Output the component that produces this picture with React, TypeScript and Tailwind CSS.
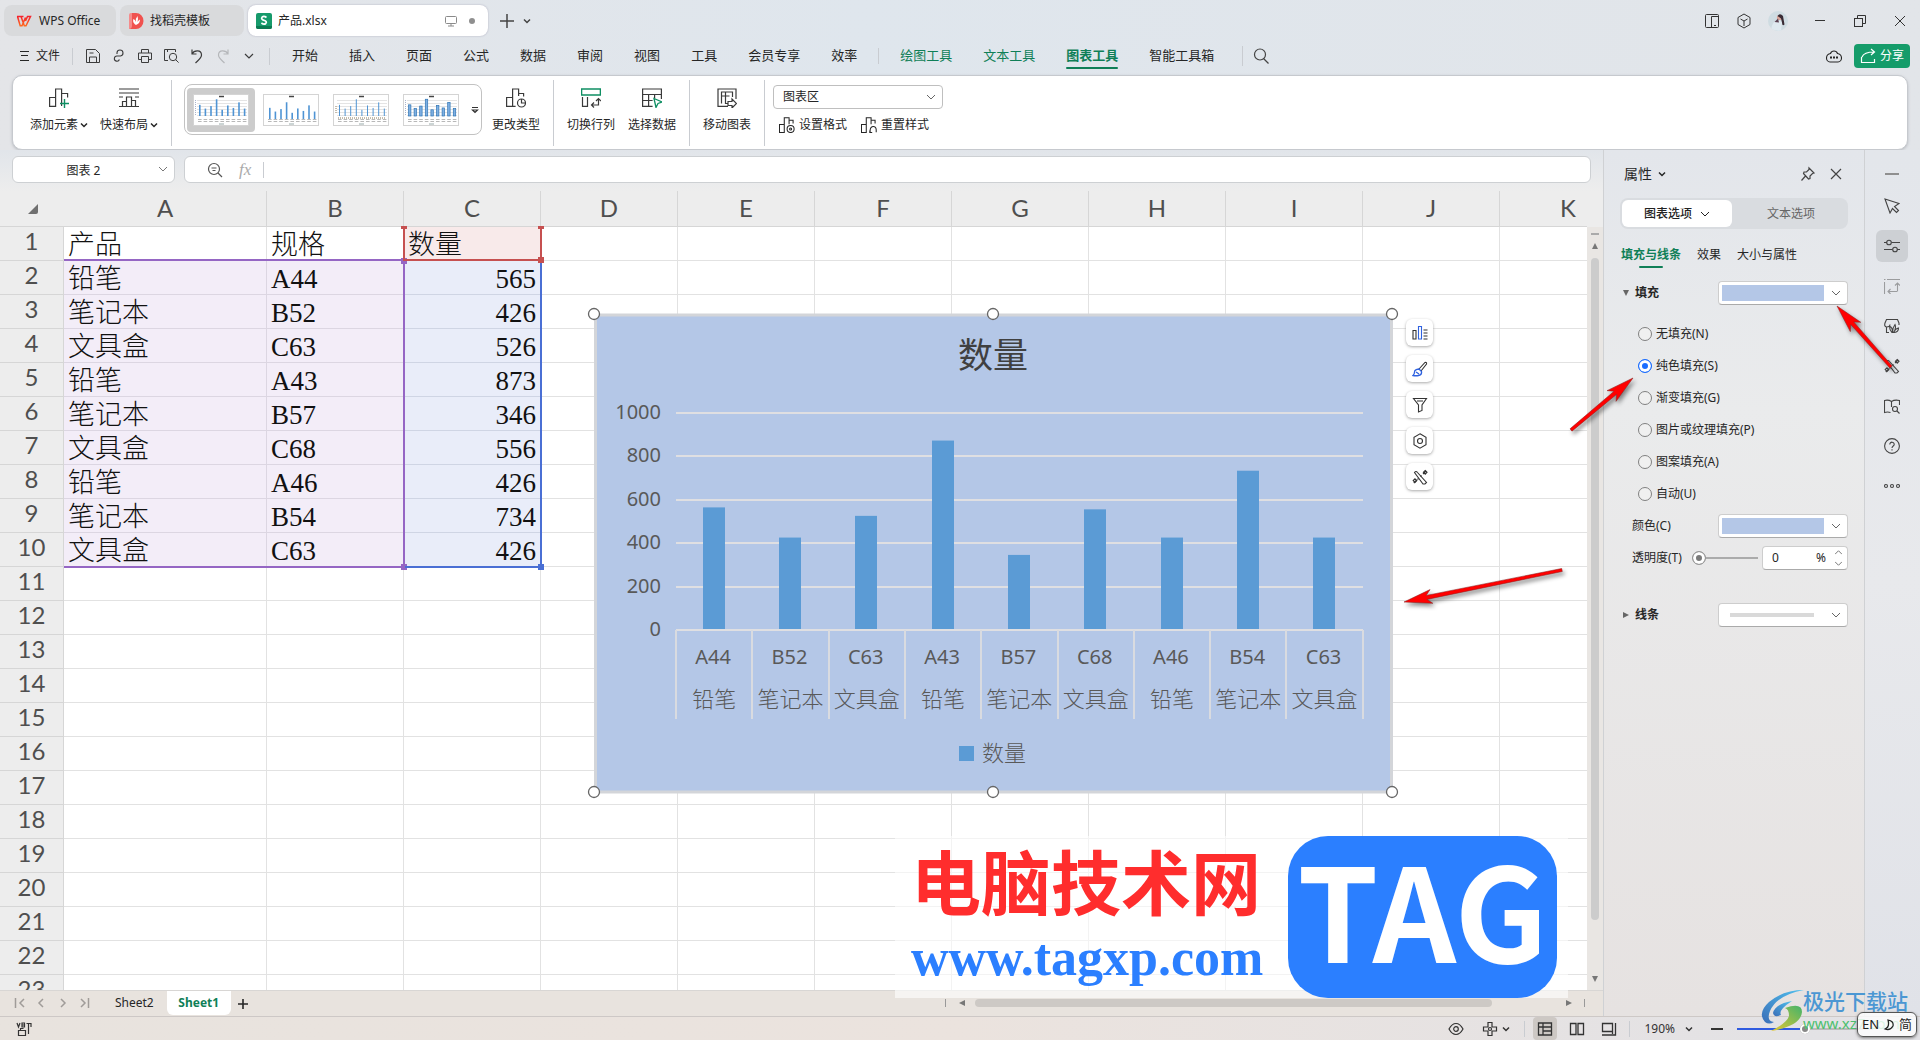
import React from "react";

type IconProps = { children: React.ReactNode; className?: string; box?: number; sw?: number };

function Icon({ children, className = "size-4", box = 16, sw = 1 }: IconProps) {
  return (
    <svg
      viewBox={`0 0 ${box} ${box}`}
      className={`shrink-0 ${className}`}
      fill="none"
      stroke="currentColor"
      strokeWidth={sw}
      aria-hidden="true"
    >
      {children}
    </svg>
  );
}

function Chevron({ className = "size-[10px]", sw = 1 }: { className?: string; sw?: number }) {
  return (
    <Icon box={10} className={className} sw={sw}>
      <path d="M1 3l4 4 4-4" />
    </Icon>
  );
}

function TinyChevron() {
  return (
    <Icon box={8} className="size-2" sw={1.5}>
      <path d="M1 2.500l3 3 3-3" />
    </Icon>
  );
}

function Sep({ className }: { className: string }) {
  return <span className={`w-px shrink-0 bg-[#c9ccd1] ${className}`} />;
}

/* ---------- title bar ---------- */

function TitleBar() {
  return (
    <header className="flex h-[37px] items-start pt-[5px] text-xs text-[#262626]">
      <button className="ml-1 flex h-[31px] w-28 items-center gap-[7px] rounded-lg bg-[#d9dadc] pl-3">
        <svg viewBox="0 0 16 12" className="h-3 w-4" aria-hidden="true">
          <defs>
            <linearGradient id="wps" x1="0" y1="0" x2="0" y2="1">
              <stop offset="0" stopColor="#f5222d" />
              <stop offset="1" stopColor="#ff6a1f" />
            </linearGradient>
          </defs>
          <path
            d="M1 1.500h6.500M1.500 1.500L4.200 10.800H6L9.500 2.500M5 1.500L8.300 10.800H10L14.500 1.500H11.500L9.500 6"
            fill="none"
            stroke="url(#wps)"
            strokeWidth="1.500"
          />
        </svg>
        WPS Office
      </button>
      <button className="ml-1 flex h-[31px] w-[124px] items-center gap-[6px] rounded-lg bg-[#d9dadc] pl-2">
        <svg viewBox="0 0 16 16" className="size-4" aria-hidden="true">
          <path d="M1 2q0-2 2-2h4v16H1z" fill="#f58b8b" />
          <path d="M4 0h4a7.500 8 0 0 1 0 16H2q2-1 2-3z" fill="#f0524f" />
          <path d="M8 12C4.500 10 5 7 5.500 6q2 1 2.500 3Q7.500 5 9.500 3q1 3 0 6 1-2 2.500-2.500 0 4-4 5.500z" fill="#fff" />
        </svg>
        找稻壳模板
      </button>
      <div className="ml-1 flex h-[31px] w-60 items-center rounded-lg bg-white pl-2 shadow-[0_0_2px_#aab]">
        <svg viewBox="0 0 16 16" className="size-4" aria-hidden="true">
          <rect width="16" height="16" rx="2" fill="#169a6b" />
          <path d="M0 13h16v1q0 2-2 2H2q-2 0-2-2z" fill="#0b7a52" />
          <path d="M10.500 4.500Q8 2.600 6.200 4c-1.300 1.200-.4 2.800 1.800 3.300s3 2 1.700 3.200Q8 12 5.400 10" fill="none" stroke="#fff" strokeWidth="1.700" />
        </svg>
        <span className="ml-1.5 flex-1">产品.xlsx</span>
        <Icon className="size-3 text-[#8a8a8a]" box={12}>
          <rect x=".5" y="1.500" width="11" height="7" rx="1" />
          <path d="M6 8.500v2.500M3 11h6" />
        </Icon>
        <span className="mr-[13px] ml-3 size-[6px] rounded-full bg-[#8f8f8f]" />
      </div>
      <button aria-label="新建" className="mt-2 ml-[11px] text-[#444]">
        <Icon className="size-4" sw={1.500}>
          <path d="M8 1v14M1 8h14" />
        </Icon>
      </button>
      <button aria-label="更多标签" className="mt-3 ml-2 text-[#444]">
        <TinyChevron />
      </button>

      <div className="mr-3 ml-auto flex h-[31px] items-center text-[#333]">
        <button aria-label="窗口布局">
          <Icon>
            <rect x="1.500" y="1.500" width="13" height="13" rx="1" />
            <path d="M7.500 14V3.500h7M10 12.500h2" />
          </Icon>
        </button>
        <button aria-label="应用" className="ml-4">
          <Icon>
            <path d="M8 1l6 3.500v7L8 15l-6-3.500v-7zM4.500 6L8 8l3.500-2M8 8v5" />
          </Icon>
        </button>
        <span className="relative ml-4 flex size-5 items-center justify-center overflow-hidden rounded-full bg-[#cfdce2]">
          <svg viewBox="0 0 20 20" className="size-5" aria-hidden="true">
            <path d="M3 19q1-9 7-10l4 2-1 9z" fill="#dfeaf0" />
            <circle cx="11.500" cy="6.500" r="2.600" fill="#d9a79c" />
            <path d="M9.500 5q2.500-3.500 5.500 0l1.500 8.500q-2.500 2-2.500-2l-1-4z" fill="#3a2c35" />
            <path d="M6.500 11l3.500-3.500 1 4z" fill="#5b4252" />
          </svg>
        </span>
        <button aria-label="最小化" className="ml-6">
          <Icon>
            <path d="M3 7.500h10" />
          </Icon>
        </button>
        <button aria-label="还原" className="ml-6">
          <Icon>
            <rect x="2.500" y="5.500" width="8" height="8" />
            <path d="M5.500 5.500v-3h8v8h-3" />
          </Icon>
        </button>
        <button aria-label="关闭" className="ml-6">
          <Icon>
            <path d="M3 3l10 10M13 3L3 13" />
          </Icon>
        </button>
      </div>
    </header>
  );
}

/* ---------- menu row ---------- */

function MenuRow() {
  const tabs = ["开始", "插入", "页面", "公式", "数据", "审阅", "视图", "工具", "会员专享", "效率"];
  return (
    <nav className="flex h-[38px] items-center pl-5 text-[#262626]">
      <button className="flex items-center gap-[6px] text-xs">
        <Icon className="size-[10px]" box={10}>
          <path d="M0 .5h9M1 4.500h7M0 9.500h9" />
        </Icon>
        文件
      </button>
      <Sep className="ml-3 h-[17px]" />
      <div className="ml-3 flex gap-[10px] text-[#3c3c3c]">
        <button aria-label="保存">
          <Icon>
            <path d="M1.500 14.500v-13h9l4 4v9zM4.500 14v-5h7v5M4.500 5h4" />
          </Icon>
        </button>
        <button aria-label="输出">
          <Icon sw={1.100}>
            <path d="M6 6V4.800A3 3 0 1 1 9.500 8H6a2.600 2.600 0 1 0 2.400 3.500" />
          </Icon>
        </button>
        <button aria-label="打印">
          <Icon>
            <path d="M4.500 5V1.500h7V5M4 11.500H1.500V5h13v6.500H12M4.500 8.500h7v6h-7z" />
          </Icon>
        </button>
        <button aria-label="打印预览">
          <Icon>
            <path d="M12.500 4V1.500h-11v11H5M4.500 4v-2.500" />
            <circle cx="10" cy="9" r="3.700" />
            <path d="M12.600 11.600l3 3" />
          </Icon>
        </button>
        <button aria-label="撤销">
          <Icon sw={1.200}>
            <path d="M3 1.500v4.500h4.500M3 6c2-4 9.500-4.500 9.500 1 0 3-3 5-6 8" />
          </Icon>
        </button>
        <button aria-label="恢复" className="text-[#b5b7ba]">
          <Icon sw={1.200}>
            <path d="M13 1.500v4.500H8.500M13 6c-2-4-9.500-4.500-9.500 1 0 3 3 5 6 8" />
          </Icon>
        </button>
        <button aria-label="更多">
          <Icon sw={1.200}>
            <path d="M4 6l4 4 4-4" />
          </Icon>
        </button>
      </div>
      <Sep className="ml-3 h-[17px]" />
      <div className="ml-[22px] flex gap-[31px] text-[13px]">
        {tabs.map((t) => (
          <button key={t}>{t}</button>
        ))}
      </div>
      <Sep className="ml-[21px] h-4" />
      <div className="ml-[21px] flex gap-[31px] text-[13px] text-[#0f7f57]">
        <button>绘图工具</button>
        <button>文本工具</button>
        <button className="relative font-bold">
          图表工具
          <span className="absolute inset-x-0 -bottom-[3px] h-[2px] rounded bg-[#0f7f57]" />
        </button>
        <button className="text-[#262626]">智能工具箱</button>
      </div>
      <Sep className="ml-[28px] h-5" />
      <button aria-label="搜索" className="ml-[10px] text-[#444]">
        <Icon sw={1.200}>
          <circle cx="7" cy="6.500" r="5.500" />
          <path d="M10.500 10.500l5 5" />
        </Icon>
      </button>
      <button aria-label="云同步" className="ml-auto">
        <Icon sw={1.100}>
          <path d="M4.500 5.500a3.700 3.700 0 0 1 7 0C14 6 15.500 8 15.500 10S14 14 12 14H4C2 14 .5 12 .5 10s1.500-4 4-4.500z" />
          <path d="M4 9.500h2M7 9.500h2M10 9.500h2" strokeWidth="2" />
        </Icon>
      </button>
      <button className="mr-[10px] ml-3 flex h-6 w-14 items-center justify-center gap-1 rounded bg-[#159c6a] text-xs text-white">
        <Icon sw={1.200}>
          <path d="M1.500 9v5.500h13V11M2 9q2-5 12-5M11 1l3.500 3-3.500 3" />
        </Icon>
        分享
      </button>
    </nav>
  );
}

/* ---------- ribbon ---------- */

function MiniChart({ variant }: { variant: number }) {
  const data = [18, 12, 16, 27, 10, 17, 13, 22, 12];
  return (
    <svg viewBox="0 0 56 32" className="h-8 w-14" aria-hidden="true">
      <rect x=".5" y=".5" width="55" height="31" fill="#fff" stroke="#d4d4d4" />
      {variant !== 1 && (
        <path d="M4 6.500h50M4 9.500h50M4 12.500h50M4 15.500h50M4 18.500h50M4 21.500h50" stroke="#e4e4e4" strokeWidth="1" />
      )}
      <path d="M26 2.500h5" stroke="#444" strokeWidth="1.500" />
      {data.map((v, i) => {
        const h = v * 0.620;
        const x = 6 + i * 5.600;
        return variant === 3 ? (
          <rect key={i} x={x - 0.500} y={22 - h} width="2.400" height={h} fill="#7fb0e2" stroke="#2e75b6" strokeWidth=".7" />
        ) : (
          <rect key={i} x={x} y={(variant === 1 ? 25 : 22) - h} width={variant === 2 ? 1 : 1.600} height={h} fill="#4f94d4" />
        );
      })}
      {data.map((_, i) => (
        <path key={i} d={`M${5 + i * 5.600} 25.500h3.600M${5 + i * 5.600} 27.500h3.600`} stroke="#b8b8b8" strokeWidth="1" />
      ))}
      {variant === 2 && <path d="M3 12v7M5 24h48" stroke="#8a7a5a" strokeWidth="1" strokeDasharray="1 1" />}
      {variant !== 2 && variant !== 1 && <path d="M2.500 6v16" stroke="#a9b4cc" strokeWidth="1" strokeDasharray="1 1" />}
      <path d="M26 30h5" stroke="#9aa" strokeWidth="1" />
    </svg>
  );
}

function RibbonButton({ icon, label, arrow }: { icon: React.ReactNode; label: string; arrow?: boolean }) {
  return (
    <button className="flex flex-col items-center gap-[9px] text-xs leading-4 text-[#262626]">
      <Icon box={20} className="size-5 text-[#3a3a3a]" sw={1.200}>
        {icon}
      </Icon>
      <span className="flex items-center gap-[2px] whitespace-nowrap">
        {label}
        {arrow && <TinyChevron />}
      </span>
    </button>
  );
}

const bars = "M.6 19.400V9.500h6v9.900zM6.600 12V1h6v8";

function Ribbon() {
  return (
    <section className="mx-3 flex h-[75px] items-start rounded-[10px] border border-[#c6c9ce] bg-white pl-[17px] shadow-[0_1px_3px_#b8bbc0]">
      <div className="flex gap-3 pt-3">
        <RibbonButton
          label="添加元素"
          arrow
          icon={
            <>
              <path d="M.6 18.400V9.500h6v8.900zM6.600 9.500V1h6v17M12.600 5.500h6v4" />
              <path d="M15.500 11v9M11 15.500h9" stroke="#0f8f63" strokeWidth="1.400" />
            </>
          }
        />
        <RibbonButton
          label="快速布局"
          arrow
          icon={<path d="M0 1h20M0 5h20M0 18.500h20M3.500 18.500v-5h4M7.500 18.500V9h5v9.500M12.500 12.500h4v6M0 9h4M16 9h4" />}
        />
      </div>
      <Sep className="mt-1 ml-[13px] h-[66px]" />
      <div className="mt-2 ml-3 flex h-[51px] w-[298px] items-center gap-[2px] rounded-lg border border-[#c2c2c2] pl-[2px]">
        {[0, 1, 2, 3].map((i) => (
          <button
            key={i}
            aria-label={`图表样式 ${i + 1}`}
            className={`flex h-11 w-[68px] items-center justify-center rounded ${i === 0 ? "bg-[#cccccc]" : ""}`}
          >
            <MiniChart variant={i} />
          </button>
        ))}
        <button aria-label="更多样式" className="ml-1">
          <Icon box={8} className="size-2 text-[#333]" sw={1.200}>
            <path d="M1 1.500h6M1.500 4L4 6.500 6.500 4z" />
          </Icon>
        </button>
      </div>
      <div className="ml-[10px] pt-3">
        <RibbonButton
          label="更改类型"
          icon={
            <>
              <path d="M.6 18.400V9.500h6v8.900zM6.600 9.500V1h6v7M12.600 5.500h5v3M6.600 18.400h3" />
              <circle cx="15.500" cy="15" r="4" />
              <path d="M15.500 11v4h4" />
            </>
          }
        />
      </div>
      <Sep className="mt-1 ml-[13px] h-[66px]" />
      <div className="ml-[13px] flex gap-[13px] pt-3">
        <RibbonButton
          label="切换行列"
          icon={
            <>
              <path d="M.6 1h18.800v6H.6z" stroke="#0f8f63" strokeWidth="1.400" />
              <path d="M1.500 9v9.400h5V9M10.500 17h7v-6.500M13 14.500L10.500 17l2.500 2.500M15 13l2.500-2.500L20 13" />
            </>
          }
        />
        <RibbonButton
          label="选择数据"
          icon={
            <>
              <path d="M.6 1h18.800v5.500H.6zM.6 6.500v11.900h10M.6 12.500h10M6.600 6.500v11.900M12.600 6.500v4M19.400 6v5" />
              <path d="M12 10.500l8 3.500-4 1.500-2 4z" stroke="#0f8f63" strokeWidth="1.300" />
            </>
          }
        />
      </div>
      <Sep className="mt-1 ml-[13px] h-[66px]" />
      <div className="ml-[13px] pt-3">
        <RibbonButton
          label="移动图表"
          icon={
            <>
              <path d="M19 11V1H1v17.400h10M4.500 15.500V4h11v5M4.500 8h8M8.500 4v11.500H11" />
              <path d="M11 13.500h4V11l4.500 4.500L15 20v-2.500h-4z" />
            </>
          }
        />
      </div>
      <Sep className="mt-1 ml-[13px] h-[66px]" />
      <div className="ml-2 pt-[9px] text-xs text-[#262626]">
        <div className="relative w-[170px]">
          <select
            aria-label="图表元素"
            className="h-6 w-full appearance-none rounded border border-[#bfbfbf] bg-white pl-[9px] text-xs leading-5"
          >
            <option>图表区</option>
          </select>
          <span className="pointer-events-none absolute top-[7px] right-[7px] text-[#666]">
            <Chevron />
          </span>
        </div>
        <div className="mt-2 flex gap-[14px] pl-[6px] leading-4">
          <button className="flex items-center gap-1">
            <Icon box={20} sw={1.300} className="size-4">
              <path d={bars} />
              <path d="M12.600 4h5v4" />
              <circle cx="14.500" cy="15" r="4.400" />
              <circle cx="14.500" cy="15" r="1.300" />
            </Icon>
            设置格式
          </button>
          <button className="flex items-center gap-1">
            <Icon box={20} sw={1.300} className="size-4">
              <path d={bars} />
              <path d="M12.600 4h5v4M11 17v2.500h3M11.500 19c-1-9 7.500-9 7.500-3v3" />
            </Icon>
            重置样式
          </button>
        </div>
      </div>
    </section>
  );
}

/* ---------- formula bar ---------- */

function FormulaBar() {
  return (
    <div className="flex h-[41px] shrink-0 items-start gap-[9px] pt-[6px] pr-3 pl-3">
      <div className="relative w-[163px]">
        <input
          aria-label="名称框"
          defaultValue="图表 2"
          className="h-[27px] w-full rounded-md border border-[#cdd0d3] bg-white pr-5 text-center text-xs text-[#262626]"
        />
        <span className="absolute top-2 right-[7px] text-[#777]">
          <Chevron />
        </span>
      </div>
      <div className="flex h-[27px] flex-1 items-center rounded-md border border-[#cdd0d3] bg-white pl-[22px]">
        <button aria-label="缩小" className="text-[#555]">
          <Icon sw={1.200}>
            <circle cx="7" cy="7" r="5.500" />
            <path d="M11 11l4 4M4.500 6h5M5.500 8.500h3" />
          </Icon>
        </button>
        <button aria-label="插入函数" className="ml-4 font-['Liberation_Serif'] text-[17px] leading-4 text-[#aaa] italic">
          fx
        </button>
        <Sep className="ml-3 h-4" />
        <input aria-label="编辑栏" className="h-full min-w-0 flex-1 px-2 text-xs outline-none" />
      </div>
    </div>
  );
}

/* ---------- sheet ---------- */

const columns = ["A", "B", "C", "D", "E", "F", "G", "H", "I", "J", "K"];

const records: [string, string, number][] = [
  ["铅笔", "A44", 565],
  ["笔记本", "B52", 426],
  ["文具盒", "C63", 526],
  ["铅笔", "A43", 873],
  ["笔记本", "B57", 346],
  ["文具盒", "C68", 556],
  ["铅笔", "A46", 426],
  ["笔记本", "B54", 734],
  ["文具盒", "C63", 426],
];

function cellText(row: number, col: number): string {
  if (row === 0) return ["产品", "规格", "数量"][col] ?? "";
  const r = records[row - 1];
  return r && col < 3 ? String(r[col]) : "";
}

function cellFill(row: number, col: number): string {
  if (row === 0 && col === 2) return "bg-[#f8eaea] border-[#eed9d9]";
  if (row >= 1 && row <= 9 && col < 2) return "bg-[#f3edf8] border-[#dcd6e2]";
  if (row >= 1 && row <= 9 && col === 2) return "bg-[#e9edf9] border-[#cfd5e4]";
  return "bg-white border-[#e2e2e2]";
}

function SheetTable() {
  return (
    <table className="w-[1637px] table-fixed border-separate border-spacing-0">
      <colgroup>
        <col className="w-16" />
        <col className="w-[203px]" />
        {columns.slice(1).map((c) => (
          <col key={c} className="w-[137px]" />
        ))}
      </colgroup>
      <thead>
        <tr className="h-9 bg-[#ededed] font-['Lato',sans-serif] text-2xl leading-6 text-[#4f4f4f]">
          <th className="border-b border-[#d6d6d6] p-0">
            <svg viewBox="0 0 12 12" className="ml-[27px] size-3" aria-hidden="true">
              <path d="M11 1v8q0 2-2 2H1z" fill="#707070" />
            </svg>
          </th>
          {columns.map((c) => (
            <th key={c} className="border-r border-b border-[#d6d6d6] p-0 pb-[2px] font-normal">
              {c}
            </th>
          ))}
        </tr>
      </thead>
      <tbody>
        {Array.from({ length: 23 }, (_, r) => (
          <tr key={r} className="h-[34px]">
            <th className="border-r border-b border-[#d6d6d6] bg-[#ededed] p-0 pb-[5px] text-center font-['Lato',sans-serif] text-2xl leading-7 font-normal text-[#4f4f4f]">
              {r + 1}
            </th>
            {columns.map((c, i) => (
              <td
                key={c}
                className={`overflow-hidden border-r border-b p-0 px-1 pt-[3px] font-['Liberation_Serif','Noto_Sans_CJK_SC',serif] text-[27px] leading-[30px] font-light whitespace-nowrap text-[#111] ${
                  i === 2 && r > 0 ? "text-right" : "text-left"
                } ${cellFill(r, i)}`}
              >
                {cellText(r, i)}
              </td>
            ))}
          </tr>
        ))}
      </tbody>
    </table>
  );
}

function Knob({ className }: { className: string }) {
  return <span className={`absolute size-[6px] ${className}`} />;
}

function RangeFrames() {
  return (
    <>
      <div className="absolute top-[68px] left-16 h-[309px] w-[341px] border-2 border-l-0 border-[#9566c4]">
        <Knob className="-top-[3px] -right-1 bg-[#9566c4]" />
        <Knob className="-right-1 -bottom-1 bg-[#9566c4]" />
      </div>
      <div className="absolute top-[69px] left-[405px] h-[308px] w-[137px] border-r-2 border-b-2 border-[#4a6fd4]">
        <Knob className="-right-1 -bottom-1 bg-[#4a6fd4]" />
      </div>
      <div className="absolute top-9 left-[403px] h-[34px] w-[139px] border-2 border-t-0 border-[#c65050]">
        <Knob className="-top-px -right-1 h-[3px] bg-[#c65050]" />
        <Knob className="-top-px -left-1 h-[3px] bg-[#c65050]" />
        <Knob className="-right-1 -bottom-1 bg-[#c65050]" />
      </div>
    </>
  );
}

function Chart() {
  const left = 81;
  const base = 316;
  const step = 76.300;
  const plotW = 687;
  const scale = 0.217;
  const handles = [
    [-1, 0],
    [398, 0],
    [797, 0],
    [-1, 478],
    [398, 478],
    [797, 478],
  ];
  return (
    <svg
      viewBox="0 0 797 479"
      className="absolute top-[123px] left-[595px] h-[479px] w-[797px] overflow-visible"
      role="img"
      aria-label="数量 图表"
    >
      <rect x=".5" y="1" width="796" height="477" fill="#b4c7e7" stroke="#d3d5d9" strokeWidth="3" />
      <text x="398" y="54" textAnchor="middle" fontSize="35" fill="#404040" className="font-['Noto_Sans_CJK_SC',sans-serif]">
        数量
      </text>
      <g className="font-['Noto_Sans','Noto_Sans_CJK_SC',sans-serif]" fill="#595959" fontSize="20">
        {[0, 200, 400, 600, 800, 1000].map((v) => (
          <g key={v}>
            <path d={`M${left} ${Math.round(base - v * scale)}h${plotW}`} stroke="#dfdfe2" strokeWidth="2" />
            <text x="66" y={Math.round(base - v * scale) + 6} textAnchor="end">
              {v}
            </text>
          </g>
        ))}
        {records.map(([name, spec, n], i) => {
          const cx = left + step * (i + 0.500);
          return (
            <g key={i}>
              <rect x={Math.round(cx - 11.300)} y={base - n * scale} width="22" height={n * scale - 1} fill="#5b9bd5" />
              <text x={cx - 1} y="350" textAnchor="middle">
                {spec}
              </text>
              <text x={cx} y="393" textAnchor="middle" fontSize="22" fontWeight="300">
                {name}
              </text>
            </g>
          );
        })}
        {Array.from({ length: 10 }, (_, i) => (
          <path key={i} d={`M${left + Math.round(i * step)} ${base}v89`} stroke="#d9dbe0" strokeWidth="2" />
        ))}
        <rect x="364" y="432" width="15" height="15" fill="#5b9bd5" />
        <text x="387" y="447" fontSize="22" fontWeight="300">
          数量
        </text>
      </g>
      {handles.map(([x, y]) => (
        <circle key={`${x}-${y}`} cx={x} cy={y} r="5.500" fill="#fff" stroke="#666" strokeWidth="1.300" />
      ))}
    </svg>
  );
}

const wand = (
  <>
    <path d="M2.500 3.500q1.500-2 3 0l9 10-1.500 1.500-2 0zM1.800 14l3-3M11 5l3-3" />
    <path d="M13.200 1.500l1.800 1.800-1.800 1.800-1.800-1.800zM3 9.800l1.800 1.800L3 13.400l-1.800-1.800z" />
    <path d="M9.500 6.500l-1 1M6.500 9.500l-1 1" />
  </>
);

function ChartButtons() {
  const items: [string, React.ReactNode][] = [
    [
      "图表元素",
      <>
        <path d="M1 5.500h3v8.500H1zM11.500 5h4M11.500 8h4M11.500 11h4M11.500 14h4" />
        <path d="M6.500 1.500h3V14h-3z" stroke="#2f62e0" />
      </>,
    ],
    [
      "图表样式",
      <>
        <path d="M7 8l6-6.500q2-.5 1.500 1.500L9 10" />
        <path d="M7 8l2.500 2.500Q10 14 6.500 14.500 4 15 1 14.500q1.500-1 1.500-3.500T7 8zM4 11l3 2" stroke="#2f62e0" strokeWidth="1.300" />
      </>,
    ],
    ["图表筛选器", <path d="M1.500 1.500h13L10 8v5.500L6.500 15V8zM5 4h6" />],
    [
      "设置",
      <>
        <path d="M8 .8l6 3.400v7.600l-6 3.400-6-3.400V4.200z" />
        <circle cx="8" cy="8" r="2.500" />
      </>,
    ],
    ["智能美化", wand],
  ];
  return (
    <div className="absolute top-32 left-[1406px] flex flex-col gap-[9px] text-[#333]">
      {items.map(([label, icon]) => (
        <button
          key={label}
          aria-label={label}
          className="flex size-[27px] items-center justify-center rounded-md bg-white shadow-[0_1px_3px_#aaa]"
        >
          <Icon sw={1.100}>{icon}</Icon>
        </button>
      ))}
    </div>
  );
}

function VScroll() {
  return (
    <div className="flex w-4 shrink-0 flex-col items-center bg-[#e9e6e3] text-[#777]">
      <div className="h-9 w-full bg-[#ededed]" />
      <span className="mt-[6px] h-[2px] w-2 bg-[#aaa]" />
      <svg viewBox="0 0 6 6" className="mt-2 size-[6px]" aria-hidden="true">
        <path d="M0 6l3-6 3 6z" fill="#777" />
      </svg>
      <span className="mt-[9px] mb-[56px] w-2 flex-1 rounded bg-[#cccccc]" />
      <svg viewBox="0 0 6 6" className="mb-2 size-[6px]" aria-hidden="true">
        <path d="M0 0l3 6 3-6z" fill="#777" />
      </svg>
    </div>
  );
}

function SheetTabs() {
  return (
    <div className="flex h-[26px] shrink-0 items-start border-t border-[#d8d6d4] pl-[11px] text-[13px] text-[#262626]">
      <div className="flex h-6 items-center gap-[6px] text-[#a09c99]">
        <button aria-label="第一个">
          <Icon sw={1.500}>
            <path d="M4.500 3v10M13 4L9 8l4 4" />
          </Icon>
        </button>
        <button aria-label="上一个">
          <Icon sw={1.500}>
            <path d="M10 4L6 8l4 4" />
          </Icon>
        </button>
        <button aria-label="下一个">
          <Icon sw={1.500}>
            <path d="M6 4l4 4-4 4" />
          </Icon>
        </button>
        <button aria-label="最后一个">
          <Icon sw={1.500}>
            <path d="M4 4l4 4-4 4M11.500 3v10" />
          </Icon>
        </button>
      </div>
      <button className="ml-[22px] h-6 text-xs">Sheet2</button>
      <button className="ml-[13px] h-6 w-16 rounded-b-md bg-white text-xs font-bold text-[#0f7f57]">Sheet1</button>
      <button aria-label="新建工作表" className="mt-2 ml-[7px]">
        <Icon box={10} className="size-[10px]" sw={1.600}>
          <path d="M5 0v10M0 5h10" />
        </Icon>
      </button>
      <div className="mr-[18px] ml-auto flex h-6 w-[640px] items-center text-[#777]">
        <span className="h-2 w-px bg-[#999]" />
        <svg viewBox="0 0 6 6" className="ml-[13px] size-[6px]" aria-hidden="true">
          <path d="M6 0L0 3l6 3z" fill="#777" />
        </svg>
        <span className="mr-[74px] ml-[10px] h-2 flex-1 rounded bg-[#cdc9c5]" />
        <svg viewBox="0 0 6 6" className="size-[6px]" aria-hidden="true">
          <path d="M0 0l6 3-6 3z" fill="#777" />
        </svg>
        <span className="ml-3 h-2 w-px bg-[#999]" />
      </div>
    </div>
  );
}

/* ---------- property panel ---------- */

function DropBox({ children, label }: { children: React.ReactNode; label: string }) {
  return (
    <button
      aria-label={label}
      aria-haspopup="listbox"
      className="flex h-6 w-[130px] items-center rounded border border-[#cdcdcd] border-b-[#aaa] bg-white pl-[3px]"
    >
      {children}
      <span className="mr-[6px] ml-auto text-[#666]">
        <Chevron />
      </span>
    </button>
  );
}

function PropertyPanel() {
  const fills = ["无填充(N)", "纯色填充(S)", "渐变填充(G)", "图片或纹理填充(P)", "图案填充(A)", "自动(U)"];
  return (
    <aside className="w-[261px] shrink-0 border-l border-[#cfd1d4] bg-linear-to-b from-[#e3e6eb] via-[#eaebec] via-30% to-[#e6e2e1] px-4 text-xs text-[#262626]">
      <div className="mt-[14px] flex h-5 items-center pl-1">
        <button className="flex items-center gap-[6px] text-sm">
          属性
          <TinyChevron />
        </button>
        <button aria-label="固定" className="ml-auto text-[#444]">
          <Icon sw={1.200}>
            <path d="M9 2l5 5-1.500.5L10 10v2.500L8.500 13 3.500 7.500 4 6h2.500L9 3.500zM5.500 10L1.500 14.500" />
          </Icon>
        </button>
        <button aria-label="关闭面板" className="mr-1 ml-3 text-[#444]">
          <Icon sw={1.200}>
            <path d="M3 3l10 10M13 3L3 13" />
          </Icon>
        </button>
      </div>
      <div className="mt-[14px] flex h-[31px] rounded-lg bg-[#d9dce0] p-[2px]">
        <button className="flex h-[27px] w-[110px] items-center justify-center gap-2 rounded-md bg-white font-medium text-[#222]">
          图表选项
          <Chevron />
        </button>
        <button className="flex-1 pl-1 text-[#666]">文本选项</button>
      </div>
      <div className="mt-4 flex h-5 items-center gap-4 pl-px">
        <button className="relative font-bold text-[#0f7f57]">
          填充与线条
          <span className="absolute -bottom-[5px] left-[18px] h-[2px] w-6 rounded bg-[#0f7f57]" />
        </button>
        <button>效果</button>
        <button>大小与属性</button>
      </div>
      <div className="mt-4 flex h-6 items-center justify-between">
        <button className="flex items-center gap-[6px] pl-[3px] font-bold">
          <svg viewBox="0 0 6 6" className="size-[6px]" aria-hidden="true">
            <path d="M0 0h6L3 6z" fill="#666" />
          </svg>
          填充
        </button>
        <DropBox label="填充颜色">
          <span className="h-4 w-[102px] bg-[#b4c7e7]" />
        </DropBox>
      </div>
      <fieldset className="mt-[13px] pl-[18px]">
        {fills.map((f, i) => (
          <label key={f} className="flex h-8 items-center gap-1">
            <input
              type="radio"
              name="fill"
              defaultChecked={i === 1}
              className="size-[14px] appearance-none rounded-full border border-[#808080] bg-[#f0f0f0] checked:border-[#1a6dff] checked:bg-[#1a6dff] checked:shadow-[inset_0_0_0_3px_#fff]"
            />
            {f}
          </label>
        ))}
      </fieldset>
      <div className="flex h-8 items-center justify-between pl-3">
        <span>颜色(C)</span>
        <DropBox label="颜色">
          <span className="h-4 w-[102px] bg-[#b4c7e7]" />
        </DropBox>
      </div>
      <div className="flex h-8 items-center pl-3">
        <label htmlFor="opacity" className="w-[60px]">
          透明度(T)
        </label>
        <input
          id="opacity"
          type="range"
          defaultValue={0}
          className="h-4 w-[66px] appearance-none bg-transparent [&::-webkit-slider-runnable-track]:h-[2px] [&::-webkit-slider-runnable-track]:bg-[#ababab] [&::-webkit-slider-thumb]:-mt-[6px] [&::-webkit-slider-thumb]:size-[14px] [&::-webkit-slider-thumb]:appearance-none [&::-webkit-slider-thumb]:rounded-full [&::-webkit-slider-thumb]:border [&::-webkit-slider-thumb]:border-[#999] [&::-webkit-slider-thumb]:bg-[#7a7a7a] [&::-webkit-slider-thumb]:shadow-[inset_0_0_0_3px_#fff]"
        />
        <div className="ml-auto flex h-6 w-[86px] items-center rounded border border-[#cdcdcd] border-b-[#aaa] bg-white">
          <input aria-label="透明度数值" defaultValue="0" className="w-[53px] pl-[9px] text-xs" />
          <span>%</span>
          <span className="mr-[5px] ml-auto flex flex-col gap-1 text-[#666]">
            <Icon box={8} className="size-[7px]">
              <path d="M0 6l4-4 4 4" />
            </Icon>
            <Icon box={8} className="size-[7px]">
              <path d="M0 2l4 4 4-4" />
            </Icon>
          </span>
        </div>
      </div>
      <div className="mt-[25px] flex h-8 items-center justify-between">
        <button className="flex items-center gap-[6px] pl-[3px] font-bold">
          <svg viewBox="0 0 6 6" className="size-[6px]" aria-hidden="true">
            <path d="M0 0v6l6-3z" fill="#666" />
          </svg>
          线条
        </button>
        <DropBox label="线条样式">
          <span className="ml-2 h-1 w-[84px] bg-[#d9d9d9]" />
        </DropBox>
      </div>
    </aside>
  );
}

function SideRail() {
  const items: [string, React.ReactNode][] = [
    ["选择", <path d="M1 1l14 4.500-4.500 3 4 4-2 2-4-4L6 15z" />],
    [
      "属性",
      <>
        <path d="M0 4.500h3M7.500 4.500H16M0 11.500h8.500M13 11.500h3" />
        <circle cx="5" cy="4.500" r="2.300" />
        <circle cx="11" cy="11.500" r="2.300" />
      </>,
    ],
    ["分析", <path d="M.5 4v12M3 1.500h13M0 1.500h1.500M13.500 13.500v-8M11 7.500l2.500-2.500L16 7.500M13 13.500H4.500M6.500 11L4 13.500 6.500 16" />],
    ["备注", <path d="M5 14.500H2.500V9Q0 8.500 1 5l1.500-3.500h11L15 5v2M2.500 9Q6 9 6 6.500M8 14.500q-3-3-2-6 2.500 1 2.500 6 0-5 2.500-8 1.500 4-1.500 8 2-4 5-4.500 0 4-4 4.500z" />],
    ["美化", wand],
    ["查找", <path d="M6.500 14.500q-3-1-6 0v-12q4-1 7 1 3-2 8-1V7M7.500 3.500V9M11 13.500a2.500 2.500 0 1 1 2.500-2.500 2.500 2.500 0 0 1-2.500 2.500zM13 13l2.500 2.500" />],
    [
      "帮助",
      <>
        <circle cx="8" cy="8" r="7.400" />
        <path d="M5.800 6.500c0-3.200 4.600-3 4.400 0C10.200 8 8 8 8 10M8 11.200v1.300" />
      </>,
    ],
    [
      "更多",
      <>
        <circle cx="2" cy="8" r="1.500" />
        <circle cx="8" cy="8" r="1.500" />
        <circle cx="14" cy="8" r="1.500" />
      </>,
    ],
  ];
  return (
    <aside className="flex w-14 shrink-0 flex-col items-center border-l border-[#cfd1d4] bg-linear-to-b from-[#e3e6eb] via-[#e8e9ec] to-[#e0e2e8] pr-px text-[#444]">
      <span className="mt-[23px] h-[2px] w-[14px] bg-[#8f8f8f]" />
      <div className="mt-[15px] flex flex-col gap-2">
        {items.map(([label, icon], i) => (
          <button
            key={label}
            aria-label={label}
            className={`flex size-8 items-center justify-center rounded-md ${i === 1 ? "bg-[#cdd0d4]" : ""} ${i === 2 ? "text-[#9b9c9e]" : ""}`}
          >
            <Icon sw={1.100}>{icon}</Icon>
          </button>
        ))}
      </div>
    </aside>
  );
}

/* ---------- status bar ---------- */

function StatusBar() {
  return (
    <footer className="flex h-6 shrink-0 items-center border-t border-[#cdc8c6] bg-linear-to-r from-[#e8e3de] via-[#ebe3de] to-[#e2e2e6] pl-4 text-xs text-[#333]">
      <button aria-label="宏">
        <Icon sw={1.200}>
          <path d="M1 2l1.500 4L4 2M6 2v4h2.500V2zM6 4h2.500M10.500 2.500H15V6M12.500 2.500V13M2.500 9.500h7v5h-7zM4.500 9.500v-2h3" />
        </Icon>
      </button>
      <button aria-label="护眼" className="ml-auto">
        <Icon sw={1.200}>
          <path d="M1 8q3-5.500 7-5.500T15 8q-3 5.500-7 5.500T1 8z" />
          <circle cx="8" cy="8" r="2.300" />
        </Icon>
      </button>
      <button aria-label="定位" className="ml-[18px] flex items-center gap-1">
        <Icon sw={1.200}>
          <path d="M6 1.500h4V6h4.500v4H10v4.500H6V10H1.500V6H6z" />
          <circle cx="8" cy="8" r="1.500" />
        </Icon>
        <TinyChevron />
      </button>
      <Sep className="ml-[14px] h-4" />
      <button aria-label="普通视图" className="ml-2 flex h-[23px] w-6 items-center justify-center rounded bg-[#cdc8c4]">
        <Icon sw={1.300}>
          <path d="M1.500 2h13v12h-13zM1.500 6h13M6 2v12M6 10h8.500" />
        </Icon>
      </button>
      <button aria-label="分页预览" className="ml-3">
        <Icon sw={1.300}>
          <path d="M1.500 2.500h5.500v11H1.500zM9 2.500h5.500v11H9z" />
        </Icon>
      </button>
      <button aria-label="页面布局" className="ml-4">
        <Icon sw={1.300}>
          <path d="M1.500 2.500h10v8h-10zM14.500 2v12H1M11.500 13V10.500" />
        </Icon>
      </button>
      <Sep className="ml-3 h-4" />
      <button className="ml-[14px] flex items-center gap-[10px]">
        190%
        <TinyChevron />
      </button>
      <button aria-label="缩小显示" className="ml-[18px] h-[2px] w-3 bg-[#333]" />
      <span className="mr-[47px] ml-[14px] flex">
        <input
          type="range"
          aria-label="缩放"
          defaultValue={50}
          className="h-4 w-[136px] appearance-none bg-transparent [&::-webkit-slider-runnable-track]:h-[2px] [&::-webkit-slider-runnable-track]:bg-linear-to-r [&::-webkit-slider-runnable-track]:from-[#2f5be0] [&::-webkit-slider-runnable-track]:from-50% [&::-webkit-slider-runnable-track]:to-[#bbb] [&::-webkit-slider-runnable-track]:to-50% [&::-webkit-slider-thumb]:-mt-[4px] [&::-webkit-slider-thumb]:size-[10px] [&::-webkit-slider-thumb]:appearance-none [&::-webkit-slider-thumb]:rounded-full [&::-webkit-slider-thumb]:bg-[#888] [&::-webkit-slider-thumb]:shadow-[inset_0_0_0_2px_#fff]"
        />
      </span>
    </footer>
  );
}

/* ---------- overlays ---------- */

function Arrow({ tip, tail }: { tip: [number, number]; tail: [number, number] }) {
  const dx = tail[0] - tip[0];
  const dy = tail[1] - tip[1];
  const len = Math.hypot(dx, dy);
  const angle = (Math.atan2(dy, dx) * 180) / Math.PI;
  return (
    <path
      transform={`translate(${tip[0]} ${tip[1]}) rotate(${angle})`}
      d={`M0 0L28 -7L23 -2L${len} -1.500V1.500L23 2L28 7Z`}
      fill="#ff0000"
      stroke="#8a2020"
      strokeWidth=".5"
    />
  );
}

function Annotations() {
  return (
    <svg
      viewBox="0 0 1920 1040"
      className="pointer-events-none absolute top-0 left-0 h-[1040px] w-[1920px] drop-shadow-[2px_3px_2px_rgba(0,0,0,0.45)]"
      aria-hidden="true"
    >
      <Arrow tip={[1633, 378]} tail={[1571, 430]} />
      <Arrow tip={[1837, 306]} tail={[1891, 367]} />
      <Arrow tip={[1404, 602]} tail={[1562, 570]} />
    </svg>
  );
}

function TagBanner() {
  return (
    <div className="pointer-events-none absolute top-[836px] left-[895px] flex h-[162px] w-[673px] bg-white/60">
      <div className="w-[393px] pl-4 whitespace-nowrap">
        <p className="font-['Noto_Sans_CJK_SC',sans-serif] text-[70px] leading-[88px] font-bold text-[#ff2d2d]">
          电脑技术网
        </p>
        <p className="font-['Liberation_Serif',serif] text-[52px] leading-[68px] font-bold text-[#2b7fff]">www.tagxp.com</p>
      </div>
      <div className="h-[162px] w-[269px] rounded-[40px] bg-[#2b7fff] text-center font-['Noto_Sans_CJK_SC',sans-serif] text-[130px] leading-[140px] font-bold text-white">
        TAG
      </div>
    </div>
  );
}

function CornerMark() {
  return (
    <div className="pointer-events-none absolute right-[3px] bottom-[3px] h-12 w-[156px]">
      <svg viewBox="0 0 44 42" className="absolute top-0 left-0 h-[42px] w-11" aria-hidden="true">
        <defs>
          <linearGradient id="swirlA" x1="0" y1="1" x2="1" y2="0">
            <stop offset="0" stopColor="#3b6fb8" />
            <stop offset="1" stopColor="#4fc0ee" />
          </linearGradient>
          <linearGradient id="swirlB" x1="0" y1="1" x2="1" y2="0">
            <stop offset="0" stopColor="#e6c832" />
            <stop offset="1" stopColor="#43b36a" />
          </linearGradient>
        </defs>
        <path d="M43 1Q22 1 8 13-4 24 4 33q4 3 9 0-8-1-4-11Q16 6 43 1z" fill="url(#swirlA)" />
        <path d="M31 12Q14 15 12 24q1 5 8 2-3-5 11-14z" fill="url(#swirlA)" />
        <path d="M24 19q17-6 17 4-1 14-31 19 16-8 18-15 0-7-4-8z" fill="url(#swirlB)" />
      </svg>
      <p className="absolute top-0 left-[42px] text-[21px] leading-6 font-medium whitespace-nowrap text-[#4b97d3]">极光下载站</p>
      <p className="absolute top-[24px] left-[42px] text-[15px] leading-5 whitespace-nowrap text-[#4dc06f]">www.xz7.com</p>
      <div className="absolute right-0 bottom-0 flex h-[25px] w-[60px] items-center justify-center gap-1 rounded-md border border-[#555] bg-white/80 text-[13px] text-[#222] shadow-[0_1px_3px_#777]">
        EN
        <Icon box={12} className="size-3" sw={1.200}>
          <path d="M5 1q6 1 5 6-3 5-8 3 5-2 3-9z" />
        </Icon>
        简
      </div>
    </div>
  );
}

export default function App() {
  return (
    <div className="relative flex h-screen flex-col overflow-hidden bg-[#e8e3de] font-['Noto_Sans','Noto_Sans_CJK_SC',sans-serif]">
      <div className="shrink-0 bg-linear-to-r from-[#e4e5e8] via-[#dfe6ed] via-45% to-[#e2e5e9]">
        <TitleBar />
        <MenuRow />
        <Ribbon />
      </div>
      <div className="flex min-h-0 flex-1">
        <main className="flex min-w-0 flex-1 flex-col">
          <div className="bg-linear-to-b from-[#e1e5ea] to-[#ededed]">
            <FormulaBar />
          </div>
          <div className="flex min-h-0 flex-1">
            <div className="relative min-w-0 flex-1 overflow-hidden">
              <SheetTable />
              <RangeFrames />
              <Chart />
              <ChartButtons />
            </div>
            <VScroll />
          </div>
          <SheetTabs />
        </main>
        <PropertyPanel />
        <SideRail />
      </div>
      <StatusBar />
      <TagBanner />
      <CornerMark />
      <Annotations />
    </div>
  );
}
